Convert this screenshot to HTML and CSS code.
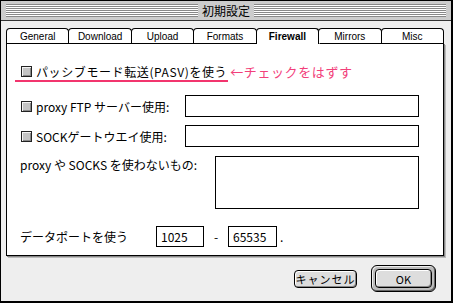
FILE: index.html
```html
<!DOCTYPE html>
<html lang="ja">
<head>
    <meta charset="UTF-8">
    <meta name="viewport" content="width=device-width, initial-scale=1.0">
    <title>初期設定</title>
    <link rel="stylesheet" href="styles.css">
</head>
<body>

    <div class="window">
        <div class="titlebar">
            <div class="stripes"></div>
            <div class="title">初期設定</div>
            <div class="stripes"></div>
        </div>

        <div class="body">
            <div class="tabs">
                <div class="tab">General</div>
                <div class="tab">Download</div>
                <div class="tab">Upload</div>
                <div class="tab">Formats</div>
                <div class="tab active">Firewall</div>
                <div class="tab">Mirrors</div>
                <div class="tab">Misc</div>
            </div>

            <div class="panel">
                <div class="pasv-line">
                    <div class="marked">
                        <span class="check"></span>
                        <span class="pasv-text">パッシブモード転送(PASV)を使う</span>
                    </div>
                    <span class="note">←チェックをはずす</span>
                </div>

                <div class="row first">
                    <div class="label">
                        <span class="check"></span>
                        <span>proxy FTP サーバー使用:</span>
                    </div>
                    <input class="field wide" type="text" value="">
                </div>

                <div class="row second">
                    <div class="label">
                        <span class="check"></span>
                        <span>SOCKゲートウエイ使用:</span>
                    </div>
                    <input class="field wide" type="text" value="">
                </div>

                <div class="row top">
                    <div class="label plain long">proxy や SOCKS を使わないもの:</div>
                    <textarea class="field area"></textarea>
                </div>

                <div class="row ports">
                    <div class="label plain short">データポートを使う</div>
                    <input class="field port" type="text" value="1025">
                    <span class="dash">-</span>
                    <input class="field port" type="text" value="65535">
                    <span class="dot">.</span>
                </div>
            </div>

            <div class="actions">
                <button class="btn">キャンセル</button>
                <div class="ring">
                    <button class="btn ok">OK</button>
                </div>
            </div>
        </div>
    </div>

</body>
</html>
```

FILE: styles.css
```css
body {
    margin: 0;
    background: #fff;
    font-family: "Noto Sans CJK JP", sans-serif;
    font-size: 12px;
    color: #000;
}
.window {
    width: 453px;
    height: 303px;
    box-sizing: border-box;
    border: 1px solid #000;
    border-right-width: 2px;
    border-bottom-width: 2px;
    background: #eee;
}
.titlebar {
    height: 19px;
    border-bottom: 1px solid #333;
    background: #ccc;
    display: flex;
    align-items: center;
    gap: 4px;
    padding: 0 5px;
}
.stripes {
    flex: 1;
    height: 13px;
    background: repeating-linear-gradient(#888 0 1px, #fff 1px 2px);
}
.title {
    font-size: 12px;
    line-height: 19px;
}
.body {
    padding: 7px 0 0 5px;
}
.tabs {
    display: flex;
    width: 438px;
    height: 15px;
    position: relative;
    z-index: 1;
}
.tab {
    flex: 1;
    box-sizing: border-box;
    height: 15px;
    margin-right: -1px;
    border: 1px solid #000;
    border-bottom: 0;
    border-radius: 4px 4px 0 0;
    background: #fff;
    text-align: center;
    font-family: "Liberation Sans", sans-serif;
    font-size: 10px;
    line-height: 15px;
}
.tab:last-child {
    margin-right: 0;
}
.tab.active {
    height: 16px;
    font-weight: bold;
    box-shadow: 1px 0 0 #888;
}
.panel {
    box-sizing: border-box;
    width: 438px;
    height: 213px;
    border: 1px solid #000;
    background: #fff;
    box-shadow: 1px 1px 0 #888, 2px 2px 0 #bbb;
    padding-left: 13px;
}
.check {
    width: 11px;
    height: 11px;
    box-sizing: border-box;
    border: 1px solid #222;
    background: #c4c4c4;
    box-shadow: inset 1px 1px 0 #f4f4f4, inset -1px -1px 0 #888;
    flex: none;
}
.pasv-line {
    display: flex;
    align-items: center;
    margin-top: 18px;
    margin-left: -5px;
}
.marked {
    display: flex;
    align-items: center;
    gap: 4px;
    height: 17px;
    padding: 0 1px 0 6px;
    border-bottom: 2px solid #f2356e;
}
.pasv-text {
    letter-spacing: 0.6px;
}
.note {
    color: #f2407a;
    font-size: 13px;
    letter-spacing: 0.6px;
    margin-left: 2px;
    margin-bottom: 2px;
}
.row {
    display: flex;
    align-items: center;
}
.row.first {
    margin-top: 12px;
}
.row.second {
    margin-top: 8px;
}
.row.top {
    align-items: flex-start;
    margin-top: 9px;
}
.row.ports {
    margin-top: 17px;
}
.label {
    width: 164px;
    padding-left: 1px;
    display: flex;
    align-items: center;
    gap: 4px;
}
.label.plain {
    padding-left: 0;
}
.label.long {
    width: 195px;
    line-height: 18px;
}
.label.short {
    width: 136px;
}
.field {
    box-sizing: border-box;
    border: 1px solid #000;
    border-radius: 0;
    background: #fff;
    font-family: "Noto Sans CJK JP", sans-serif;
    font-size: 12px;
    padding: 0 4px;
    margin: 0;
    outline: none;
    appearance: none;
}
.field.wide {
    width: 234px;
    height: 22px;
}
.field.area {
    width: 204px;
    height: 53px;
    resize: none;
}
.field.port {
    height: 21px;
    width: 48px;
}
.field.port + .dash + .field.port {
    width: 49px;
}
.dash {
    width: 24px;
    text-align: center;
}
.dot {
    margin-left: 3px;
}
.actions {
    display: flex;
    justify-content: flex-end;
    align-items: center;
    gap: 14px;
    margin-top: 9px;
    padding-right: 15px;
}
.btn {
    box-sizing: border-box;
    width: 63px;
    height: 18px;
    padding: 0;
    border: 1px solid #000;
    border-radius: 4px;
    background: #ddd;
    box-shadow: inset 1px 1px 0 #fff, inset -1px -1px 0 #888;
    font-family: "Noto Sans CJK JP", sans-serif;
    font-size: 11px;
    letter-spacing: 1px;
    line-height: 16px;
    color: #000;
}
.ring {
    border: 1px solid #000;
    border-radius: 6px;
    padding: 3px;
    background: #bbb;
    box-shadow: inset 1px 1px 0 #eee, inset -1px -1px 0 #666;
}
.btn.ok {
    width: 57px;
    height: 19px;
    letter-spacing: 0;
}
```
